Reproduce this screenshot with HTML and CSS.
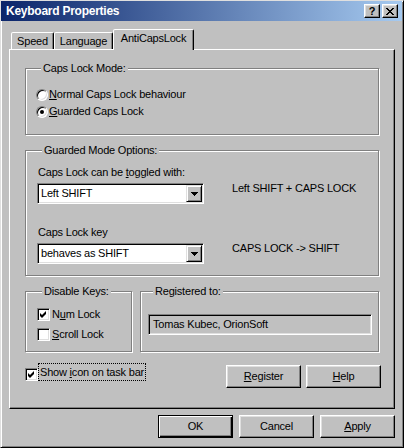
FILE: index.html
```html
<!DOCTYPE html>
<html lang="en">
<head>
<meta charset="utf-8">
<title>Keyboard Properties</title>
<link rel="stylesheet" href="styles.css">
</head>
<body>
<div class="window">
  <div class="titlebar">
    <span class="title">Keyboard Properties</span>
    <div class="title-buttons">
      <div class="tbtn tbtn-help">?</div>
      <div class="tbtn tbtn-close">
        <svg width="8" height="7" viewBox="0 0 8 7"><path d="M0 0h2v1H0zM6 0h2v1H6zM1 1h2v1H1zM5 1h2v1H5zM2 2h4v1H2zM3 3h2v1H3zM2 4h4v1H2zM1 5h2v1H1zM5 5h2v1H5zM0 6h2v1H0zM6 6h2v1H6z" fill="#000"/></svg>
      </div>
    </div>
  </div>

  <div class="tabs">
    <div class="tab tab-speed">Speed</div>
    <div class="tab tab-lang">Language</div>
    <div class="tab tab-active">AntiCapsLock</div>
  </div>

  <div class="panel">
    <div class="group group-mode">
      <div class="legend">Caps Lock Mode:</div>
      <div class="radios">
        <div class="opt"><span class="radio"></span><span><u>N</u>ormal Caps Lock behaviour</span></div>
        <div class="opt"><span class="radio checked"></span><span><u>G</u>uarded Caps Lock</span></div>
      </div>
    </div>

    <div class="group group-guard">
      <div class="legend">Guarded Mode Options:</div>
      <div class="option option-first">
        <div class="opt-label">Caps Lock can be <u>t</u>oggled with:</div>
        <div class="combo">
          <span class="combo-text">Left SHIFT</span>
          <span class="combo-btn"><svg width="7" height="4" viewBox="0 0 7 4"><path d="M0 0h7v1H0zM1 1h5v1H1zM2 2h3v1H2zM3 3h1v1H3z" fill="#000"/></svg></span>
        </div>
        <div class="opt-desc">Left SHIFT + CAPS LOCK</div>
      </div>
      <div class="option option-second">
        <div class="opt-label">Caps Lock key</div>
        <div class="combo">
          <span class="combo-text">behaves as SHIFT</span>
          <span class="combo-btn"><svg width="7" height="4" viewBox="0 0 7 4"><path d="M0 0h7v1H0zM1 1h5v1H1zM2 2h3v1H2zM3 3h1v1H3z" fill="#000"/></svg></span>
        </div>
        <div class="opt-desc">CAPS LOCK -&gt; SHIFT</div>
      </div>
    </div>

    <div class="row-groups">
      <div class="group group-disable">
        <div class="legend">Disable Keys:</div>
        <div class="checks">
          <div class="opt check-row"><span class="checkbox checked"><svg width="7" height="7" viewBox="0 0 7 7"><path d="M0 2L2 4L6 0V3L2 7L0 5Z" fill="#000"/></svg></span><span>N<u>u</u>m Lock</span></div>
          <div class="opt check-row"><span class="checkbox"></span><span><u>S</u>croll Lock</span></div>
        </div>
      </div>
      <div class="group group-reg">
        <div class="legend">Registered to:</div>
        <div class="textbox">Tomas Kubec, OrionSoft</div>
      </div>
    </div>

    <div class="row-bottom">
      <div class="focus-check">
        <span class="checkbox checked"><svg width="7" height="7" viewBox="0 0 7 7"><path d="M0 2L2 4L6 0V3L2 7L0 5Z" fill="#000"/></svg></span>
        <span class="focus-label">Show <u>i</u>con on task bar</span>
      </div>
      <div class="panel-buttons">
        <div class="btn"><u>R</u>egister</div>
        <div class="btn"><u>H</u>elp</div>
      </div>
    </div>
  </div>

  <div class="dialog-buttons">
    <div class="btn btn-default">OK</div>
    <div class="btn">Cancel</div>
    <div class="btn"><u>A</u>pply</div>
  </div>
</div>
</body>
</html>
```

FILE: styles.css
```css
* {
  box-sizing: border-box;
}

html,
body {
  margin: 0;
  padding: 0;
}

body {
  background: #c0c0c0;
  color: #000;
  font-family: "Liberation Sans", Arial, sans-serif;
  font-size: 11px;
  line-height: 13px;
  letter-spacing: -0.2px;
}

u {
  text-decoration: underline;
  text-underline-offset: 1px;
}

.window {
  width: 404px;
  height: 448px;
  background: #c0c0c0;
  border: 1px solid;
  border-color: #dfdfdf #000 #000 #dfdfdf;
  box-shadow: inset 1px 1px #fff, inset -1px -1px #808080;
}

/* Title bar */
.titlebar {
  height: 20px;
  margin-right: 1px;
  padding: 0 4px 0 5px;
  display: flex;
  align-items: center;
  justify-content: space-between;
  background: linear-gradient(to right, #0a246a, #a6caf0);
}

.title {
  color: #fff;
  font-size: 12px;
  font-weight: bold;
  letter-spacing: -0.25px;
  padding-top: 1px;
}

.title-buttons {
  display: flex;
  gap: 2px;
}

.tbtn {
  width: 16px;
  height: 14px;
  display: flex;
  align-items: center;
  justify-content: center;
  background: #c0c0c0;
  border: 1px solid;
  border-color: #fff #000 #000 #fff;
  box-shadow: inset -1px -1px #808080, inset 1px 1px #dfdfdf;
}

.tbtn-help {
  font-weight: bold;
  font-size: 11px;
  line-height: 11px;
  letter-spacing: 0;
}

.tbtn-close svg {
  display: block;
}

/* Tabs */
.tabs {
  height: 20px;
  margin: 8px 0 0 10px;
  display: flex;
  align-items: flex-end;
}

.tab {
  height: 17px;
  padding-top: 2px;
  text-align: center;
  background: #c0c0c0;
  border: 1px solid;
  border-bottom: none;
  border-color: #fff #000 transparent #fff;
  border-radius: 2px 2px 0 0;
  box-shadow: inset -1px 0 #808080;
}

.tab-speed {
  width: 43px;
}

.tab-lang {
  width: 59px;
}

.tab-active {
  width: 81px;
  height: 21px;
  margin-bottom: -1px;
  position: relative;
  z-index: 1;
}

/* Panel */
.panel {
  height: 360px;
  margin: 0 8px;
  padding: 18px 15px 0 15px;
  border: 1px solid;
  border-color: #fff #000 #000 #fff;
  box-shadow: inset -1px -1px #808080;
}

/* Group boxes */
.group {
  border: 1px solid #808080;
  box-shadow: inset 1px 1px #fff, 1px 1px #fff;
}

.legend {
  width: fit-content;
  margin: -7px 0 0 5px;
  padding: 0 2px;
  background: #c0c0c0;
  line-height: 13px;
}

.group-mode {
  padding: 0 0 14px 10px;
}

.radios {
  margin-top: 11px;
}

.opt {
  height: 17px;
  display: flex;
  align-items: center;
}

.radio {
  width: 12px;
  height: 12px;
  margin-right: 1px;
  flex: none;
  border-radius: 50%;
  background: #fff;
  border: 1px solid;
  border-color: #808080 #fff #fff #808080;
  box-shadow: inset 1px 1px #000, inset -1px -1px #dfdfdf;
  display: flex;
  align-items: center;
  justify-content: center;
}

.radio.checked::after {
  content: "";
  width: 4px;
  height: 4px;
  border-radius: 50%;
  background: #000;
}

.group-guard {
  margin-top: 15px;
  padding: 0 0 11px 11px;
}

.option {
  display: grid;
  grid-template-columns: 167px auto;
  column-gap: 28px;
  row-gap: 4px;
}

.option-first {
  margin-top: 9px;
}

.option-second {
  margin-top: 22px;
}

.opt-label {
  grid-column: 1 / 3;
  padding-left: 1px;
}

.combo {
  height: 21px;
  padding: 1px;
  display: flex;
  align-items: center;
  background: #fff;
  border: 1px solid;
  border-color: #808080 #fff #fff #808080;
  box-shadow: inset 1px 1px #000, inset -1px -1px #dfdfdf;
}

.combo-text {
  flex: 1;
  padding-left: 2px;
}

.combo-btn {
  width: 16px;
  height: 17px;
  flex: none;
  display: flex;
  align-items: center;
  justify-content: center;
  background: #c0c0c0;
  border: 1px solid;
  border-color: #dfdfdf #000 #000 #dfdfdf;
  box-shadow: inset 1px 1px #fff, inset -1px -1px #808080;
}

.combo-btn svg {
  display: block;
  margin-top: 1px;
}

.opt-desc {
  align-self: start;
  margin-top: -1px;
}

/* Bottom groups */
.row-groups {
  margin-top: 15px;
  display: flex;
  gap: 8px;
}

.group-disable {
  width: 107px;
  flex: none;
  padding: 0 0 7px 11px;
}

.checks {
  margin-top: 6px;
}

.check-row {
  height: 20px;
}

.checkbox {
  width: 13px;
  height: 13px;
  margin-right: 2px;
  flex: none;
  display: flex;
  align-items: center;
  justify-content: center;
  background: #fff;
  border: 1px solid;
  border-color: #808080 #fff #fff #808080;
  box-shadow: inset 1px 1px #000, inset -1px -1px #dfdfdf;
}

.checkbox svg {
  display: block;
}

.group-reg {
  flex: 1;
  padding: 0 6px 16px 7px;
}

.textbox {
  height: 21px;
  margin-top: 16px;
  padding: 0 4px;
  display: flex;
  align-items: center;
  background: #c0c0c0;
  border: 1px solid;
  border-color: #808080 #fff #fff #808080;
  box-shadow: inset 1px 1px #000, inset -1px -1px #dfdfdf;
}

.row-bottom {
  margin-top: 11px;
  display: flex;
  align-items: flex-start;
  justify-content: space-between;
}

.focus-check {
  display: flex;
  align-items: flex-start;
}

.focus-check .checkbox {
  margin: 5px 0 0 0;
}

.focus-label {
  height: 18px;
  padding: 0 1px;
  line-height: 16px;
  border: 1px dotted #000;
}

.panel-buttons {
  margin: 2px -2px 0 0;
  display: flex;
  gap: 5px;
}

.btn {
  width: 75px;
  height: 23px;
  display: flex;
  align-items: center;
  justify-content: center;
  background: #c0c0c0;
  border: 1px solid;
  border-color: #fff #000 #000 #fff;
  box-shadow: inset -1px -1px #808080, inset 1px 1px #dfdfdf;
}

.btn-default {
  border-color: #000;
  box-shadow: inset 1px 1px #fff, inset -1px -1px #000, inset -2px -2px #808080;
}

.dialog-buttons {
  margin-top: 6px;
  padding-right: 8px;
  display: flex;
  justify-content: flex-end;
  gap: 6px;
}
```
